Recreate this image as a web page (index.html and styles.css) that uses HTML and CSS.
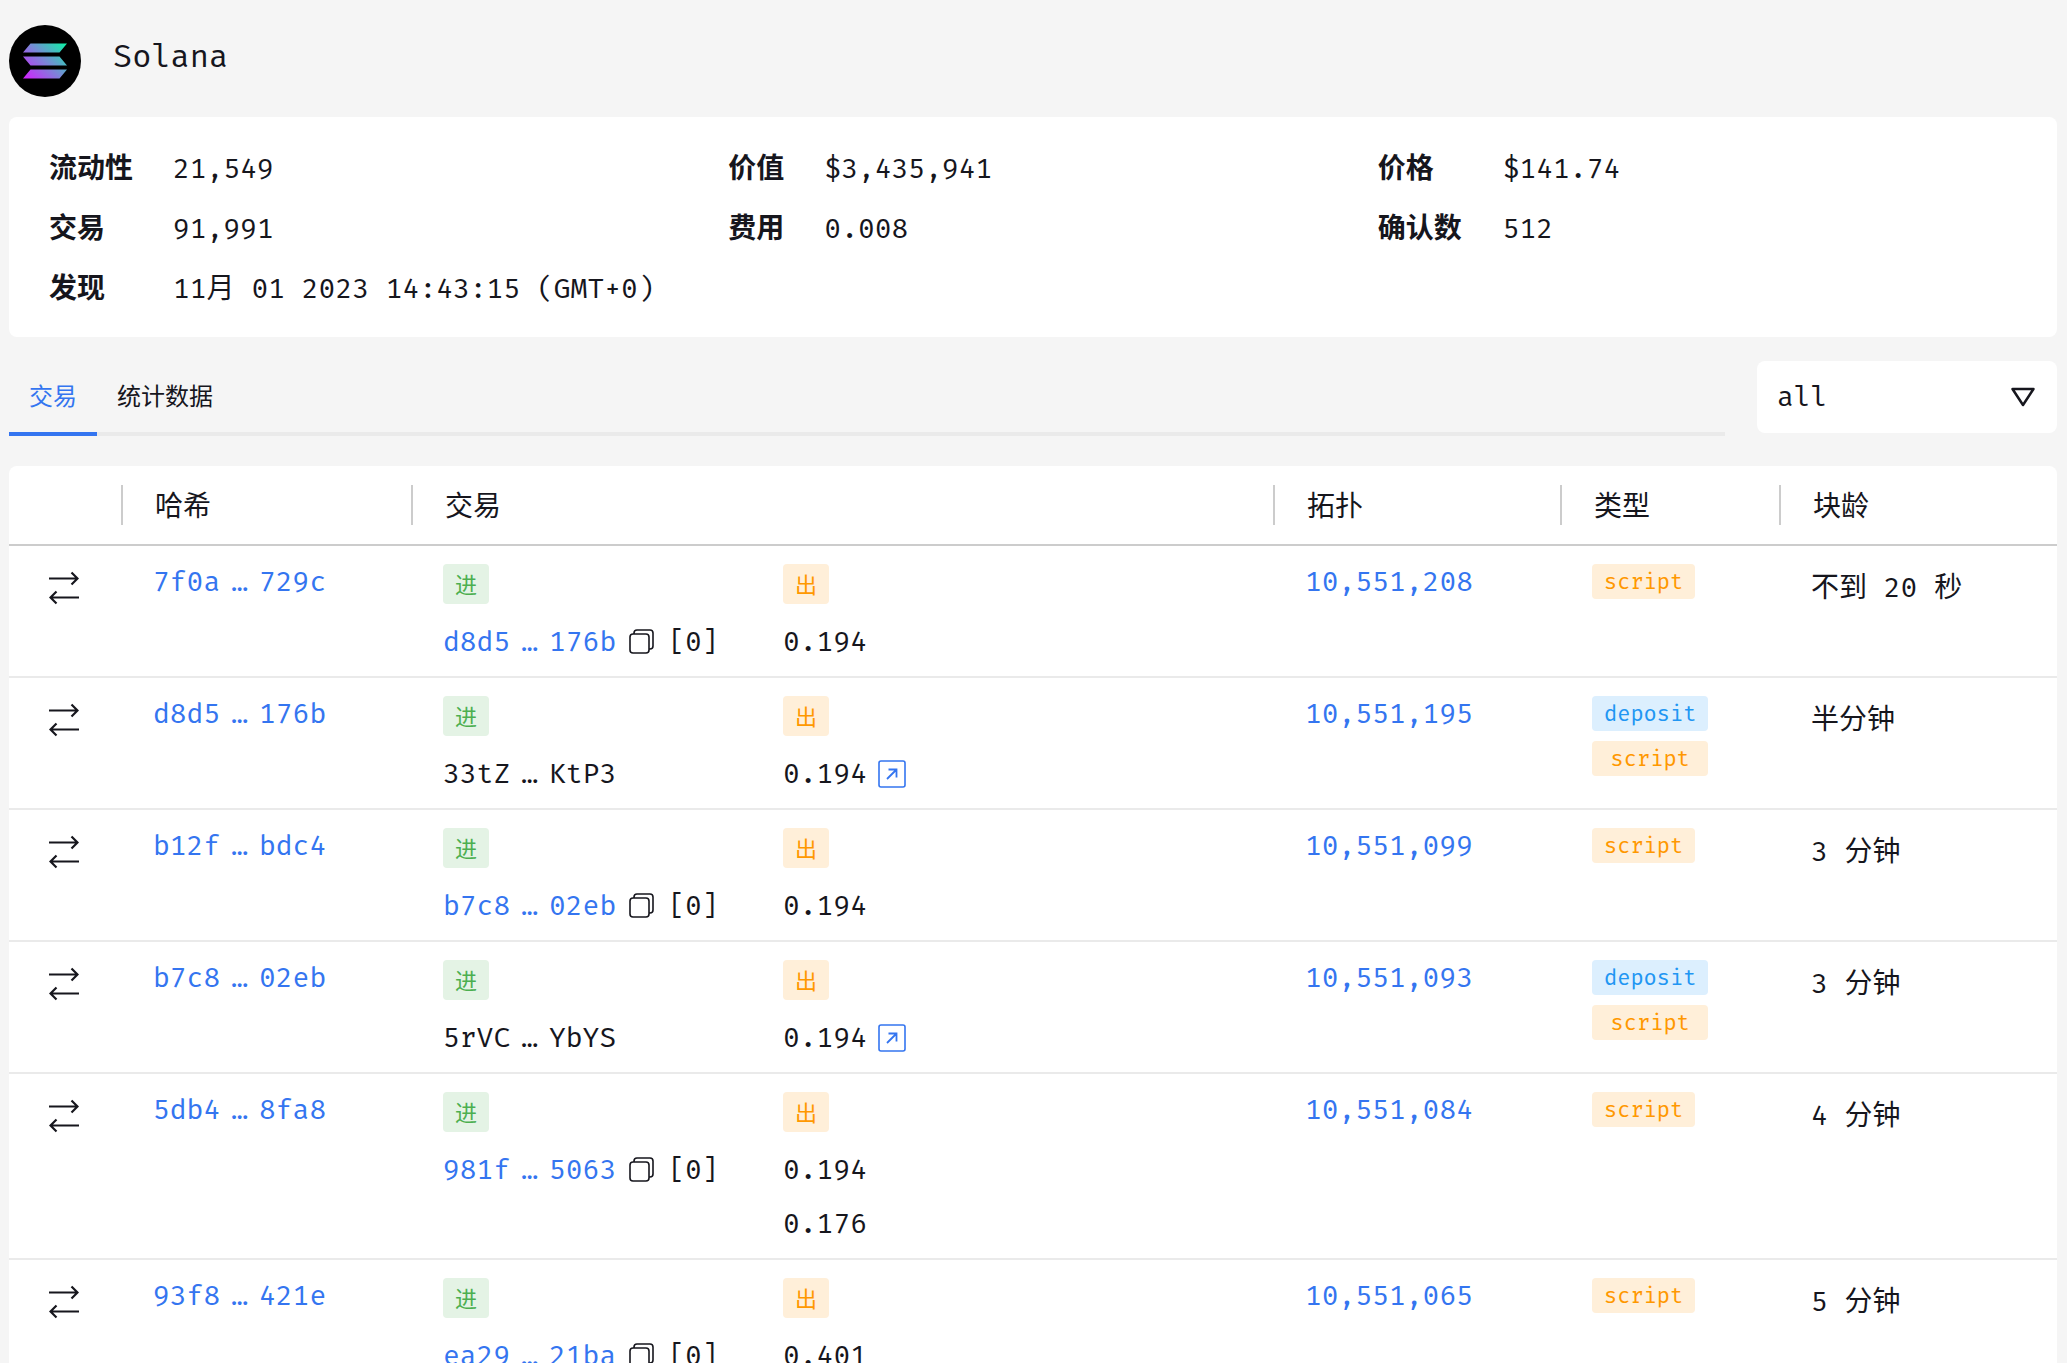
FILE: index.html
```html
<!doctype html>
<html lang="zh-CN">
<head>
    <meta charset="UTF-8">
    <meta name="viewport" content="width=device-width, initial-scale=1.0">
    <title>Solana</title>
    <link rel="stylesheet" href="styles.css">
</head>
<body>
<svg class="sprite" width="0" height="0" aria-hidden="true">
    <symbol id="swap" viewBox="0 0 30 34">
        <path d="M0 7.500h29M22.500 1.500l6 6-6 6M30 26.500H1M7.500 20.500l-6 6 6 6" fill="none" stroke="currentColor" stroke-width="2.200"/>
    </symbol>
    <symbol id="copy" viewBox="0 0 26 26">
        <rect x="1" y="5" width="19" height="19" rx="3" fill="none" stroke="currentColor" stroke-width="1.600"/>
        <path d="M5 5V4a3 3 0 0 1 3-3h13a3 3 0 0 1 3 3v13a3 3 0 0 1-3 3h-1" fill="none" stroke="currentColor" stroke-width="1.600"/>
    </symbol>
    <symbol id="open" viewBox="0 0 28 28">
        <rect x="1" y="1" width="26" height="26" rx="2" fill="none" stroke="currentColor" stroke-width="1.600"/>
        <path d="M9 19l9.500-9.500M10.500 9.500h8v8" fill="none" stroke="currentColor" stroke-width="1.800"/>
    </symbol>
</svg>

<div class="page">
    <header class="title">
        <svg class="logo" viewBox="0 0 72 72" aria-hidden="true">
            <defs>
                <linearGradient id="sol" gradientUnits="userSpaceOnUse" x1="17" y1="56" x2="56" y2="17">
                    <stop offset="0" stop-color="#d41fff"/>
                    <stop offset="0.500" stop-color="#7b86d8"/>
                    <stop offset="1" stop-color="#0cf3a4"/>
                </linearGradient>
            </defs>
            <circle cx="36" cy="36" r="36" fill="#000"/>
            <path d="M21.500 18.500H58l-7.500 9H14zM14 31.500h36.500l7.500 9H21.500zM21.500 44.500H58l-7.500 9H14z" fill="url(#sol)"/>
        </svg>
        <h1>Solana</h1>
    </header>

    <dl class="info">
        <dt>流动性</dt><dd>21,549</dd>
        <dt>价值</dt><dd>$3,435,941</dd>
        <dt>价格</dt><dd>$141.74</dd>
        <dt>交易</dt><dd>91,991</dd>
        <dt>费用</dt><dd>0.008</dd>
        <dt>确认数</dt><dd>512</dd>
        <dt>发现</dt><dd>11月 01 2023 14:43:15 (GMT+0)</dd>
    </dl>

    <div class="bar">
        <nav class="tabs">
            <a class="active" href="#tx">交易</a>
            <a href="#stats">统计数据</a>
        </nav>
        <div class="filter">
            <select aria-label="类型">
                <option>all</option>
                <option>script</option>
                <option>deposit</option>
            </select>
            <svg class="arrow" viewBox="0 0 24 20" aria-hidden="true">
                <path d="M1.500 2h21L12 18z" fill="none" stroke="currentColor" stroke-width="2.500" stroke-linejoin="round"/>
            </svg>
        </div>
    </div>

    <table class="list" id="tx">
        <colgroup>
            <col class="c-icon"><col class="c-hash"><col class="c-tx"><col class="c-topo"><col class="c-type"><col class="c-age">
        </colgroup>
        <thead>
        <tr>
            <td></td>
            <th><span>哈希</span></th>
            <th><span>交易</span></th>
            <th><span>拓扑</span></th>
            <th><span>类型</span></th>
            <th><span>块龄</span></th>
        </tr>
        </thead>
        <tbody>
        <tr>
            <td class="icon"><svg class="swap"><use href="#swap"/></svg></td>
            <td><a class="hash" href="#">7f0a<i>…</i>729c</a></td>
            <td>
                <div class="inout">
                    <div>
                        <span class="tag green">进</span>
                        <p><a class="hash" href="#">d8d5<i>…</i>176b</a><button class="copy" aria-label="复制"><svg><use href="#copy"/></svg></button>[0]</p>
                    </div>
                    <div>
                        <span class="tag orange">出</span>
                        <p>0.194</p>
                    </div>
                </div>
            </td>
            <td><a href="#">10,551,208</a></td>
            <td><div class="types"><span class="type orange">script</span></div></td>
            <td class="age">不到 20 秒</td>
        </tr>
        <tr>
            <td class="icon"><svg class="swap"><use href="#swap"/></svg></td>
            <td><a class="hash" href="#">d8d5<i>…</i>176b</a></td>
            <td>
                <div class="inout">
                    <div>
                        <span class="tag green">进</span>
                        <p><span class="hash">33tZ<i>…</i>KtP3</span></p>
                    </div>
                    <div>
                        <span class="tag orange">出</span>
                        <p>0.194<a class="open" href="#" aria-label="打开"><svg><use href="#open"/></svg></a></p>
                    </div>
                </div>
            </td>
            <td><a href="#">10,551,195</a></td>
            <td><div class="types"><span class="type blue">deposit</span><span class="type orange">script</span></div></td>
            <td class="age">半分钟</td>
        </tr>
        <tr>
            <td class="icon"><svg class="swap"><use href="#swap"/></svg></td>
            <td><a class="hash" href="#">b12f<i>…</i>bdc4</a></td>
            <td>
                <div class="inout">
                    <div>
                        <span class="tag green">进</span>
                        <p><a class="hash" href="#">b7c8<i>…</i>02eb</a><button class="copy" aria-label="复制"><svg><use href="#copy"/></svg></button>[0]</p>
                    </div>
                    <div>
                        <span class="tag orange">出</span>
                        <p>0.194</p>
                    </div>
                </div>
            </td>
            <td><a href="#">10,551,099</a></td>
            <td><div class="types"><span class="type orange">script</span></div></td>
            <td class="age">3 分钟</td>
        </tr>
        <tr>
            <td class="icon"><svg class="swap"><use href="#swap"/></svg></td>
            <td><a class="hash" href="#">b7c8<i>…</i>02eb</a></td>
            <td>
                <div class="inout">
                    <div>
                        <span class="tag green">进</span>
                        <p><span class="hash">5rVC<i>…</i>YbYS</span></p>
                    </div>
                    <div>
                        <span class="tag orange">出</span>
                        <p>0.194<a class="open" href="#" aria-label="打开"><svg><use href="#open"/></svg></a></p>
                    </div>
                </div>
            </td>
            <td><a href="#">10,551,093</a></td>
            <td><div class="types"><span class="type blue">deposit</span><span class="type orange">script</span></div></td>
            <td class="age">3 分钟</td>
        </tr>
        <tr>
            <td class="icon"><svg class="swap"><use href="#swap"/></svg></td>
            <td><a class="hash" href="#">5db4<i>…</i>8fa8</a></td>
            <td>
                <div class="inout">
                    <div>
                        <span class="tag green">进</span>
                        <p><a class="hash" href="#">981f<i>…</i>5063</a><button class="copy" aria-label="复制"><svg><use href="#copy"/></svg></button>[0]</p>
                    </div>
                    <div>
                        <span class="tag orange">出</span>
                        <p>0.194</p>
                        <p>0.176</p>
                    </div>
                </div>
            </td>
            <td><a href="#">10,551,084</a></td>
            <td><div class="types"><span class="type orange">script</span></div></td>
            <td class="age">4 分钟</td>
        </tr>
        <tr>
            <td class="icon"><svg class="swap"><use href="#swap"/></svg></td>
            <td><a class="hash" href="#">93f8<i>…</i>421e</a></td>
            <td>
                <div class="inout">
                    <div>
                        <span class="tag green">进</span>
                        <p><a class="hash" href="#">ea29<i>…</i>21ba</a><button class="copy" aria-label="复制"><svg><use href="#copy"/></svg></button>[0]</p>
                    </div>
                    <div>
                        <span class="tag orange">出</span>
                        <p>0.401</p>
                    </div>
                </div>
            </td>
            <td><a href="#">10,551,065</a></td>
            <td><div class="types"><span class="type orange">script</span></div></td>
            <td class="age">5 分钟</td>
        </tr>
        </tbody>
    </table>
</div>
</body>
</html>
```

FILE: styles.css
```css
*{
    margin: 0;
    padding: 0;
    box-sizing: border-box;
}
body{
    background-color: #f5f5f5;
    color: #16161d;
    font-family: "Fira Mono", "Liberation Mono", "Noto Sans CJK SC", monospace;
    font-size: 28px;
    line-height: 36px;
}
a{
    color: #3475f0;
    text-decoration: none;
}
.sprite{
    position: absolute;
}
.page{
    padding: 25px 10px 0 9px;
}

/* title */
.title{
    display: flex;
    gap: 32px;
}
.logo{
    width: 72px;
    height: 72px;
}
.title h1{
    font-size: 32px;
    font-weight: normal;
    line-height: 62px;
}

/* summary */
.info{
    display: grid;
    grid-template-columns: 124px 555fr 96px 553fr 125px 514fr;
    row-gap: 20px;
    margin-top: 20px;
    padding: 32px 40px 28px;
    background-color: #fff;
    border-radius: 8px;
}
.info dt{
    font-weight: bold;
    line-height: 40px;
}
.info dd{
    line-height: 40px;
    white-space: nowrap;
}

/* tabs and filter */
.bar{
    display: flex;
    align-items: flex-start;
    gap: 32px;
    margin-top: 24px;
}
.tabs{
    flex: 1;
    display: flex;
    height: 75px;
    box-shadow: inset 0 -4px #eaeaea;
}
.tabs a{
    height: 75px;
    padding: 0 20px;
    font-size: 24px;
    line-height: 72px;
    color: #16161d;
}
.tabs .active{
    color: #3475f0;
    border-bottom: 4px solid #3475f0;
}
.filter{
    position: relative;
    width: 300px;
}
.filter select{
    width: 100%;
    height: 72px;
    padding: 0 20px;
    border: none;
    border-radius: 8px;
    background-color: #fff;
    color: inherit;
    font: inherit;
    appearance: none;
}
.arrow{
    position: absolute;
    top: 26px;
    right: 22px;
    width: 24px;
    height: 20px;
    pointer-events: none;
}

/* transactions */
.list{
    width: 100%;
    margin-top: 30px;
    table-layout: fixed;
    border-spacing: 0;
    background-color: #fff;
    border-radius: 8px;
}
.c-icon{
    width: 112px;
}
.c-hash{
    width: 290px;
}
.c-topo{
    width: 287px;
}
.c-type{
    width: 219px;
}
.c-age{
    width: 278px;
}
.list thead td,
.list thead th{
    height: 80px;
    border-bottom: 2px solid #ccc;
    font-weight: normal;
    text-align: left;
}
.list th span{
    display: block;
    height: 40px;
    padding-left: 32px;
    border-left: 2px solid #ccc;
    line-height: 44px;
}
.list tbody td{
    padding: 18px 0 7px 32px;
    border-bottom: 2px solid #eaeaea;
    vertical-align: top;
}
.list tbody .icon{
    padding: 25px 0 0 40px;
}
.list tbody .age{
    padding-top: 24px;
}
.list svg{
    display: block;
}
.swap{
    width: 30px;
    height: 34px;
}
.hash i{
    margin: 0 11px;
    font-style: normal;
}
.inout{
    display: grid;
    grid-template-columns: 340px 1fr;
}
.inout p{
    display: flex;
    align-items: center;
    height: 54px;
}
.tag,
.type{
    border-radius: 4px;
    padding: 0 12px;
    font-size: 22px;
    text-align: center;
}
.tag{
    display: block;
    width: 46px;
    height: 40px;
    margin-bottom: 11px;
    line-height: 44px;
}
.types{
    display: inline-flex;
    flex-direction: column;
    gap: 10px;
    vertical-align: top;
}
.type{
    line-height: 35px;
}
.green{
    background-color: #e4f3e5;
    color: #4caf50;
}
.orange{
    background-color: #ffefd9;
    color: #ff9800;
}
.blue{
    background-color: #dceffe;
    color: #2196f3;
}
.copy{
    margin: 0 13px;
    border: none;
    background: none;
    color: inherit;
    cursor: pointer;
}
.copy svg{
    width: 26px;
    height: 26px;
}
.open{
    margin-left: 11px;
}
.open svg{
    width: 28px;
    height: 28px;
}
```
